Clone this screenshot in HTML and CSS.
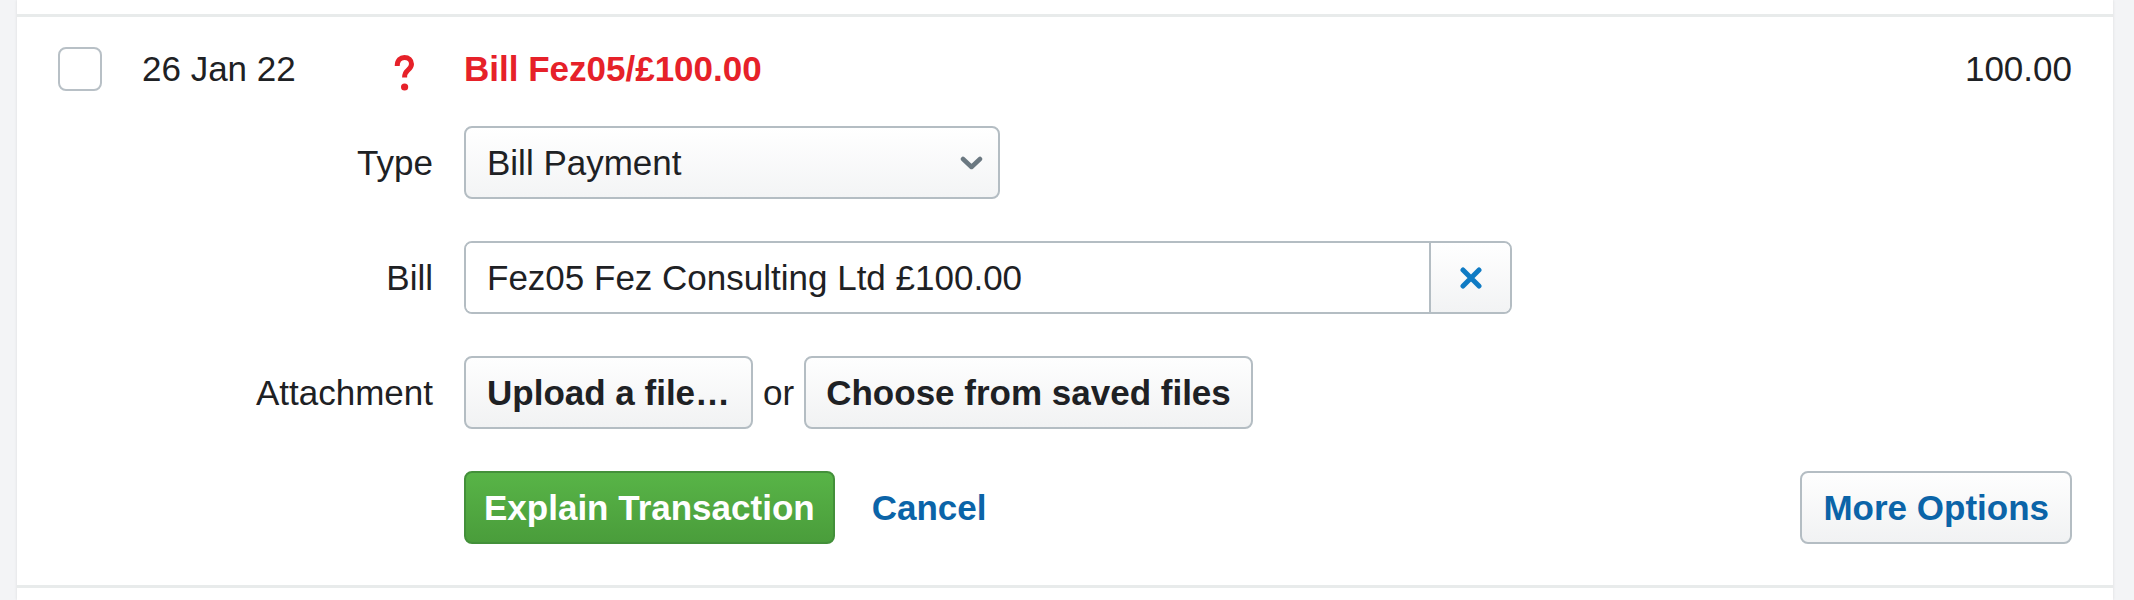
FILE: index.html
```html
<!DOCTYPE html>
<html lang="en">
<head>
<meta charset="utf-8">
<title>Explain transaction</title>
<link rel="stylesheet" href="styles.css">
</head>
<body>
<div class="list">
  <div class="txn">
    <div class="txn-head">
      <span class="checkbox"></span>
      <span class="date">26 Jan 22</span>
      <svg class="status-icon" width="20" height="36" viewBox="0 0 20 36" aria-hidden="true">
        <path d="M3.2 11C3.2 5.2 6.6 2.5 10.4 2.5C14.6 2.5 17.5 5.2 17.5 9C17.5 12.4 15.6 13.9 13.6 15.4C11.6 16.9 10.6 18.4 10.6 22.6" fill="none" stroke="#e62129" stroke-width="5"/>
        <circle cx="10.6" cy="32" r="3.6" fill="#e62129"/>
      </svg>
      <span class="desc">Bill Fez05/£100.00</span>
      <span class="amount">100.00</span>
    </div>
    <div class="form">
      <div class="label">Type</div>
      <div class="select">
        <span>Bill Payment</span>
        <svg width="23" height="14" viewBox="0 0 23 14" aria-hidden="true">
          <path d="M3 3L11.5 11L20 3" fill="none" stroke="#6b7881" stroke-width="4.5" stroke-linecap="round" stroke-linejoin="round"/>
        </svg>
      </div>

      <div class="label">Bill</div>
      <div class="combo">
        <div class="combo-text">Fez05 Fez Consulting Ltd £100.00</div>
        <div class="combo-clear">
          <svg width="22" height="22" viewBox="0 0 22 22" aria-hidden="true">
            <path d="M3 3L19 19M19 3L3 19" fill="none" stroke="#0f7bc4" stroke-width="5" stroke-linecap="round"/>
          </svg>
        </div>
      </div>

      <div class="label">Attachment</div>
      <div class="attach">
        <button class="btn btn-upload">Upload a file…</button>
        <span class="or">or</span>
        <button class="btn btn-choose">Choose from saved files</button>
      </div>

      <div></div>
      <div class="actions">
        <button class="btn btn-primary">Explain Transaction</button>
        <a class="cancel" href="#">Cancel</a>
        <button class="btn btn-more">More Options</button>
      </div>
    </div>
  </div>
</div>
</body>
</html>
```
FILE: styles.css
```css
* {
  box-sizing: border-box;
}

html,
body {
  margin: 0;
  padding: 0;
}

body {
  background: #f3f4f6;
  font-family: "Liberation Sans", Arial, Helvetica, sans-serif;
  font-size: 35px;
  color: #1e2124;
  height: 600px;
  overflow: hidden;
}

.list {
  margin: 0 21px 0 17px;
  height: 600px;
  background: #fff;
  box-shadow: 0 0 3px rgba(0, 0, 0, 0.1);
  padding-top: 14px;
}

.txn {
  border-top: 3px solid #e8ebeb;
  border-bottom: 3px solid #e8ebeb;
  padding: 30px 41px 41px;
}

.txn-head {
  display: flex;
  align-items: center;
  height: 44px;
  line-height: 44px;
}

.checkbox {
  flex: none;
  width: 44px;
  height: 44px;
  border: 2px solid #b8c0c6;
  border-radius: 8px;
  background: #fff;
}

.date {
  margin-left: 40px;
  width: 252px;
  flex: none;
}

.status-icon {
  flex: none;
  margin-top: 8px;
}

.desc {
  margin-left: 50px;
  color: #e62129;
  font-weight: bold;
}

.amount {
  margin-left: auto;
}

.form {
  margin-top: 35px;
  display: grid;
  grid-template-columns: 375px 1fr;
  column-gap: 31px;
  row-gap: 42px;
  align-items: center;
}

.label {
  text-align: right;
}

.select {
  width: 536px;
  height: 73px;
  border: 2px solid #b4bdc3;
  border-radius: 8px;
  background: linear-gradient(#ffffff, #f3f4f5);
  display: flex;
  align-items: center;
  justify-content: space-between;
  padding: 0 15px 0 21px;
}

.combo {
  width: 1048px;
  height: 73px;
  display: flex;
  border: 2px solid #b4bdc3;
  border-radius: 8px;
  overflow: hidden;
}

.combo-text {
  flex: 1;
  background: #fff;
  display: flex;
  align-items: center;
  padding-left: 21px;
}

.combo-clear {
  width: 81px;
  flex: none;
  border-left: 2px solid #b4bdc3;
  background: linear-gradient(#ffffff, #f2f3f4);
  display: flex;
  align-items: center;
  justify-content: center;
}

.attach,
.actions {
  display: flex;
  align-items: center;
  height: 73px;
}

.or {
  margin: 0 10px;
}

.btn {
  height: 73px;
  border: 2px solid #b4bdc3;
  border-radius: 8px;
  background: linear-gradient(#fefefe, #f1f2f3);
  font-family: "Liberation Sans", Arial, Helvetica, sans-serif;
  font-size: 35px;
  font-weight: bold;
  color: #1e2124;
  padding: 0 19px;
  margin: 0;
  cursor: pointer;
}

.btn-upload {
  padding: 0 21px;
}

.btn-choose {
  padding: 0 20px;
}

.btn-primary {
  background: linear-gradient(#58b447, #4a9d3b);
  border-color: #43903a;
  color: #fff;
  padding: 0 18px;
}

.cancel {
  margin-left: 37px;
  font-weight: bold;
  color: #0b64a8;
  text-decoration: none;
}

.btn-more {
  margin-left: auto;
  color: #0b64a8;
  padding: 0 21px;
}
```
